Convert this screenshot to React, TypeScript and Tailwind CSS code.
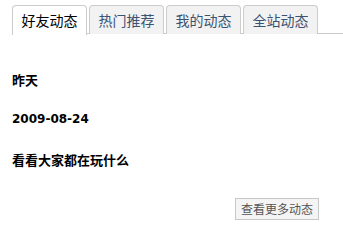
import React from "react";

const tabs = ["好友动态", "热门推荐", "我的动态", "全站动态"];

export default function App() {
  return (
    <div
      className="w-[343px] h-[239px] bg-white overflow-hidden"
      style={{ fontFamily: '"DejaVu Sans", "Noto Sans CJK SC", sans-serif' }}
    >
      <div className="pl-[12px] pt-[5px]">
        <div className="flex gap-[2px] border-b border-[#cccccc] h-[29px]">
          {tabs.map((t, i) => (
            <div
              key={t}
              className={
                i === 0
                  ? "w-[75px] h-[30px] -mb-px border border-b-0 border-[#cccccc] rounded-t-[4px] bg-white text-[14px] leading-[28px] text-black text-center"
                  : "w-[75px] h-[29px] border border-b-0 border-[#cccccc] rounded-t-[4px] bg-[#f2f2f2] text-[14px] leading-[28px] text-[#3b5372] text-center"
              }
              style={{ fontFamily: '"Noto Sans CJK SC", sans-serif' }}
            >
              {t}
            </div>
          ))}
        </div>
      </div>
      <div className="pl-[12px] pt-[37px] flex flex-col gap-[23px] font-bold text-black leading-[17px]">
        <div className="text-[13px]" style={{ fontFamily: '"Noto Sans CJK SC", sans-serif' }}>昨天</div>
        <div className="text-[12px]">2009-08-24</div>
        <div className="text-[13px]" style={{ fontFamily: '"Noto Sans CJK SC", sans-serif' }}>看看大家都在玩什么</div>
      </div>
      <div className="flex justify-end pr-[24px] pt-[30px]">
        <button
          className="w-[84px] h-[22px] border border-[#c8c8c8] bg-[#f4f4f4] text-[12px] text-[#555555] leading-[20px]"
          style={{ fontFamily: '"Noto Sans CJK SC", sans-serif' }}
        >
          查看更多动态
        </button>
      </div>
    </div>
  );
}
